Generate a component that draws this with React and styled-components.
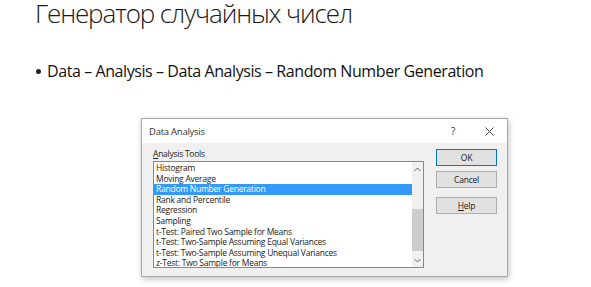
import styled, { createGlobalStyle } from 'styled-components';

const GlobalStyle = createGlobalStyle`
  html, body {
    margin: 0;
    padding: 0;
    background: #ffffff;
  }
  body {
    font-family: "Open Sans", "Noto Sans", sans-serif;
  }
`;

const Slide = styled.div`
  width: 591px;
  height: 287px;
  overflow: hidden;
  background: #ffffff;
  display: flex;
  flex-direction: column;
`;

const Title = styled.h1`
  margin: 0;
  padding: 0 0 0 35px;
  font-family: "Open Sans", sans-serif;
  font-weight: 300;
  font-size: 26px;
  line-height: 26px;
  letter-spacing: -1.1px;
  color: #1a1a1a;
`;

const Bullet = styled.div`
  margin-top: 34px;
  padding-left: 36px;
  display: flex;
  align-items: center;
  gap: 6px;
  font-family: "Open Sans", sans-serif;
  font-size: 16px;
  line-height: 22px;
  letter-spacing: -0.42px;
  color: #111;

  &::before {
    content: '';
    width: 5px;
    height: 5px;
    border-radius: 50%;
    background: #222;
  }
`;

const Dialog = styled.div`
  margin: 36px 0 0 141px;
  width: 367px;
  height: 159px;
  box-sizing: border-box;
  border: 1px solid #a8a8a8;
  background: #f0f0f0;
  box-shadow: 1px 2px 6px rgba(0, 0, 0, 0.25);
  display: flex;
  flex-direction: column;
  font-family: "Open Sans", "Noto Sans", sans-serif;
  font-size: 8.5px;
  letter-spacing: -0.25px;
  color: #222;
`;

const TitleBar = styled.div`
  height: 24px;
  background: #ffffff;
  display: flex;
  align-items: center;
  padding-left: 7px;
  font-size: 9.5px;
  color: #333;
`;

const TitleText = styled.span`
  flex: 1;
`;

const TitleButton = styled.span`
  width: 36px;
  display: flex;
  align-items: center;
  justify-content: center;
  font-size: 10px;
  color: #333;
`;

const Body = styled.div`
  flex: 1;
  display: flex;
  padding: 4px 10px 0 11px;
  gap: 12px;
`;

const LeftCol = styled.div`
  display: flex;
  flex-direction: column;
`;

const Label = styled.div`
  height: 14px;
  line-height: 14px;
  color: #222;

  u {
    text-decoration: underline;
    text-underline-offset: 1px;
  }
`;

const ListBox = styled.div`
  width: 271px;
  height: 107px;
  box-sizing: border-box;
  border: 1px solid #828790;
  background: #ffffff;
  display: flex;
`;

const Items = styled.div`
  flex: 1;
  padding-top: 1px;
  overflow: hidden;
`;

const Item = styled.div`
  height: 10.6px;
  line-height: 10.6px;
  padding-left: 2px;
  white-space: nowrap;
  background: ${({ $selected }) => ($selected ? '#3399ff' : 'transparent')};
  color: ${({ $selected }) => ($selected ? '#ffffff' : '#222')};
`;

const ScrollBar = styled.div`
  width: 11px;
  background: #f0f0f0;
  display: flex;
  flex-direction: column;
  align-items: stretch;
`;

const Arrow = styled.div`
  height: 14px;
  display: flex;
  align-items: center;
  justify-content: center;
`;

const Track = styled.div`
  flex: 1;
  display: flex;
  flex-direction: column;
  justify-content: flex-end;
  padding-bottom: 2px;
`;

const Thumb = styled.div`
  height: 42px;
  background: #cdcdcd;
`;

const Buttons = styled.div`
  display: flex;
  flex-direction: column;
  padding-top: 2px;
  gap: 5px;
`;

const Button = styled.div`
  width: 61px;
  height: 17px;
  box-sizing: border-box;
  border: 1px solid ${({ $default }) => ($default ? '#0078d7' : '#adadad')};
  background: #e1e1e1;
  display: flex;
  align-items: center;
  justify-content: center;
  color: #222;
  margin-top: ${({ $gap }) => ($gap ? '4px' : '0')};

  u {
    text-decoration: underline;
    text-underline-offset: 1px;
  }
`;

const tools = [
  'Histogram',
  'Moving Average',
  'Random Number Generation',
  'Rank and Percentile',
  'Regression',
  'Sampling',
  't-Test: Paired Two Sample for Means',
  't-Test: Two-Sample Assuming Equal Variances',
  't-Test: Two-Sample Assuming Unequal Variances',
  'z-Test: Two Sample for Means',
];

function Chevron({ up }) {
  return (
    <svg width="7" height="5" viewBox="0 0 7 5">
      <path
        d={up ? 'M0.5 4 L3.5 1 L6.5 4' : 'M0.5 1 L3.5 4 L6.5 1'}
        fill="none"
        stroke="#606060"
        strokeWidth="1"
      />
    </svg>
  );
}

function CloseIcon() {
  return (
    <svg width="9" height="9" viewBox="0 0 9 9">
      <path d="M0.5 0.5 L8.5 8.5 M8.5 0.5 L0.5 8.5" stroke="#333" strokeWidth="0.9" fill="none" />
    </svg>
  );
}

export default function App() {
  return (
    <Slide>
      <GlobalStyle />
      <Title>Генератор случайных чисел</Title>
      <Bullet>Data – Analysis – Data Analysis – Random Number Generation</Bullet>
      <Dialog>
        <TitleBar>
          <TitleText>Data Analysis</TitleText>
          <TitleButton>?</TitleButton>
          <TitleButton><CloseIcon /></TitleButton>
        </TitleBar>
        <Body>
          <LeftCol>
            <Label><u>A</u>nalysis Tools</Label>
            <ListBox>
              <Items>
                {tools.map((t, i) => (
                  <Item key={t} $selected={i === 2}>{t}</Item>
                ))}
              </Items>
              <ScrollBar>
                <Arrow><Chevron up /></Arrow>
                <Track><Thumb /></Track>
                <Arrow><Chevron /></Arrow>
              </ScrollBar>
            </ListBox>
          </LeftCol>
          <Buttons>
            <Button $default>OK</Button>
            <Button>Cancel</Button>
            <Button $gap><u>H</u>elp</Button>
          </Buttons>
        </Body>
      </Dialog>
    </Slide>
  );
}
